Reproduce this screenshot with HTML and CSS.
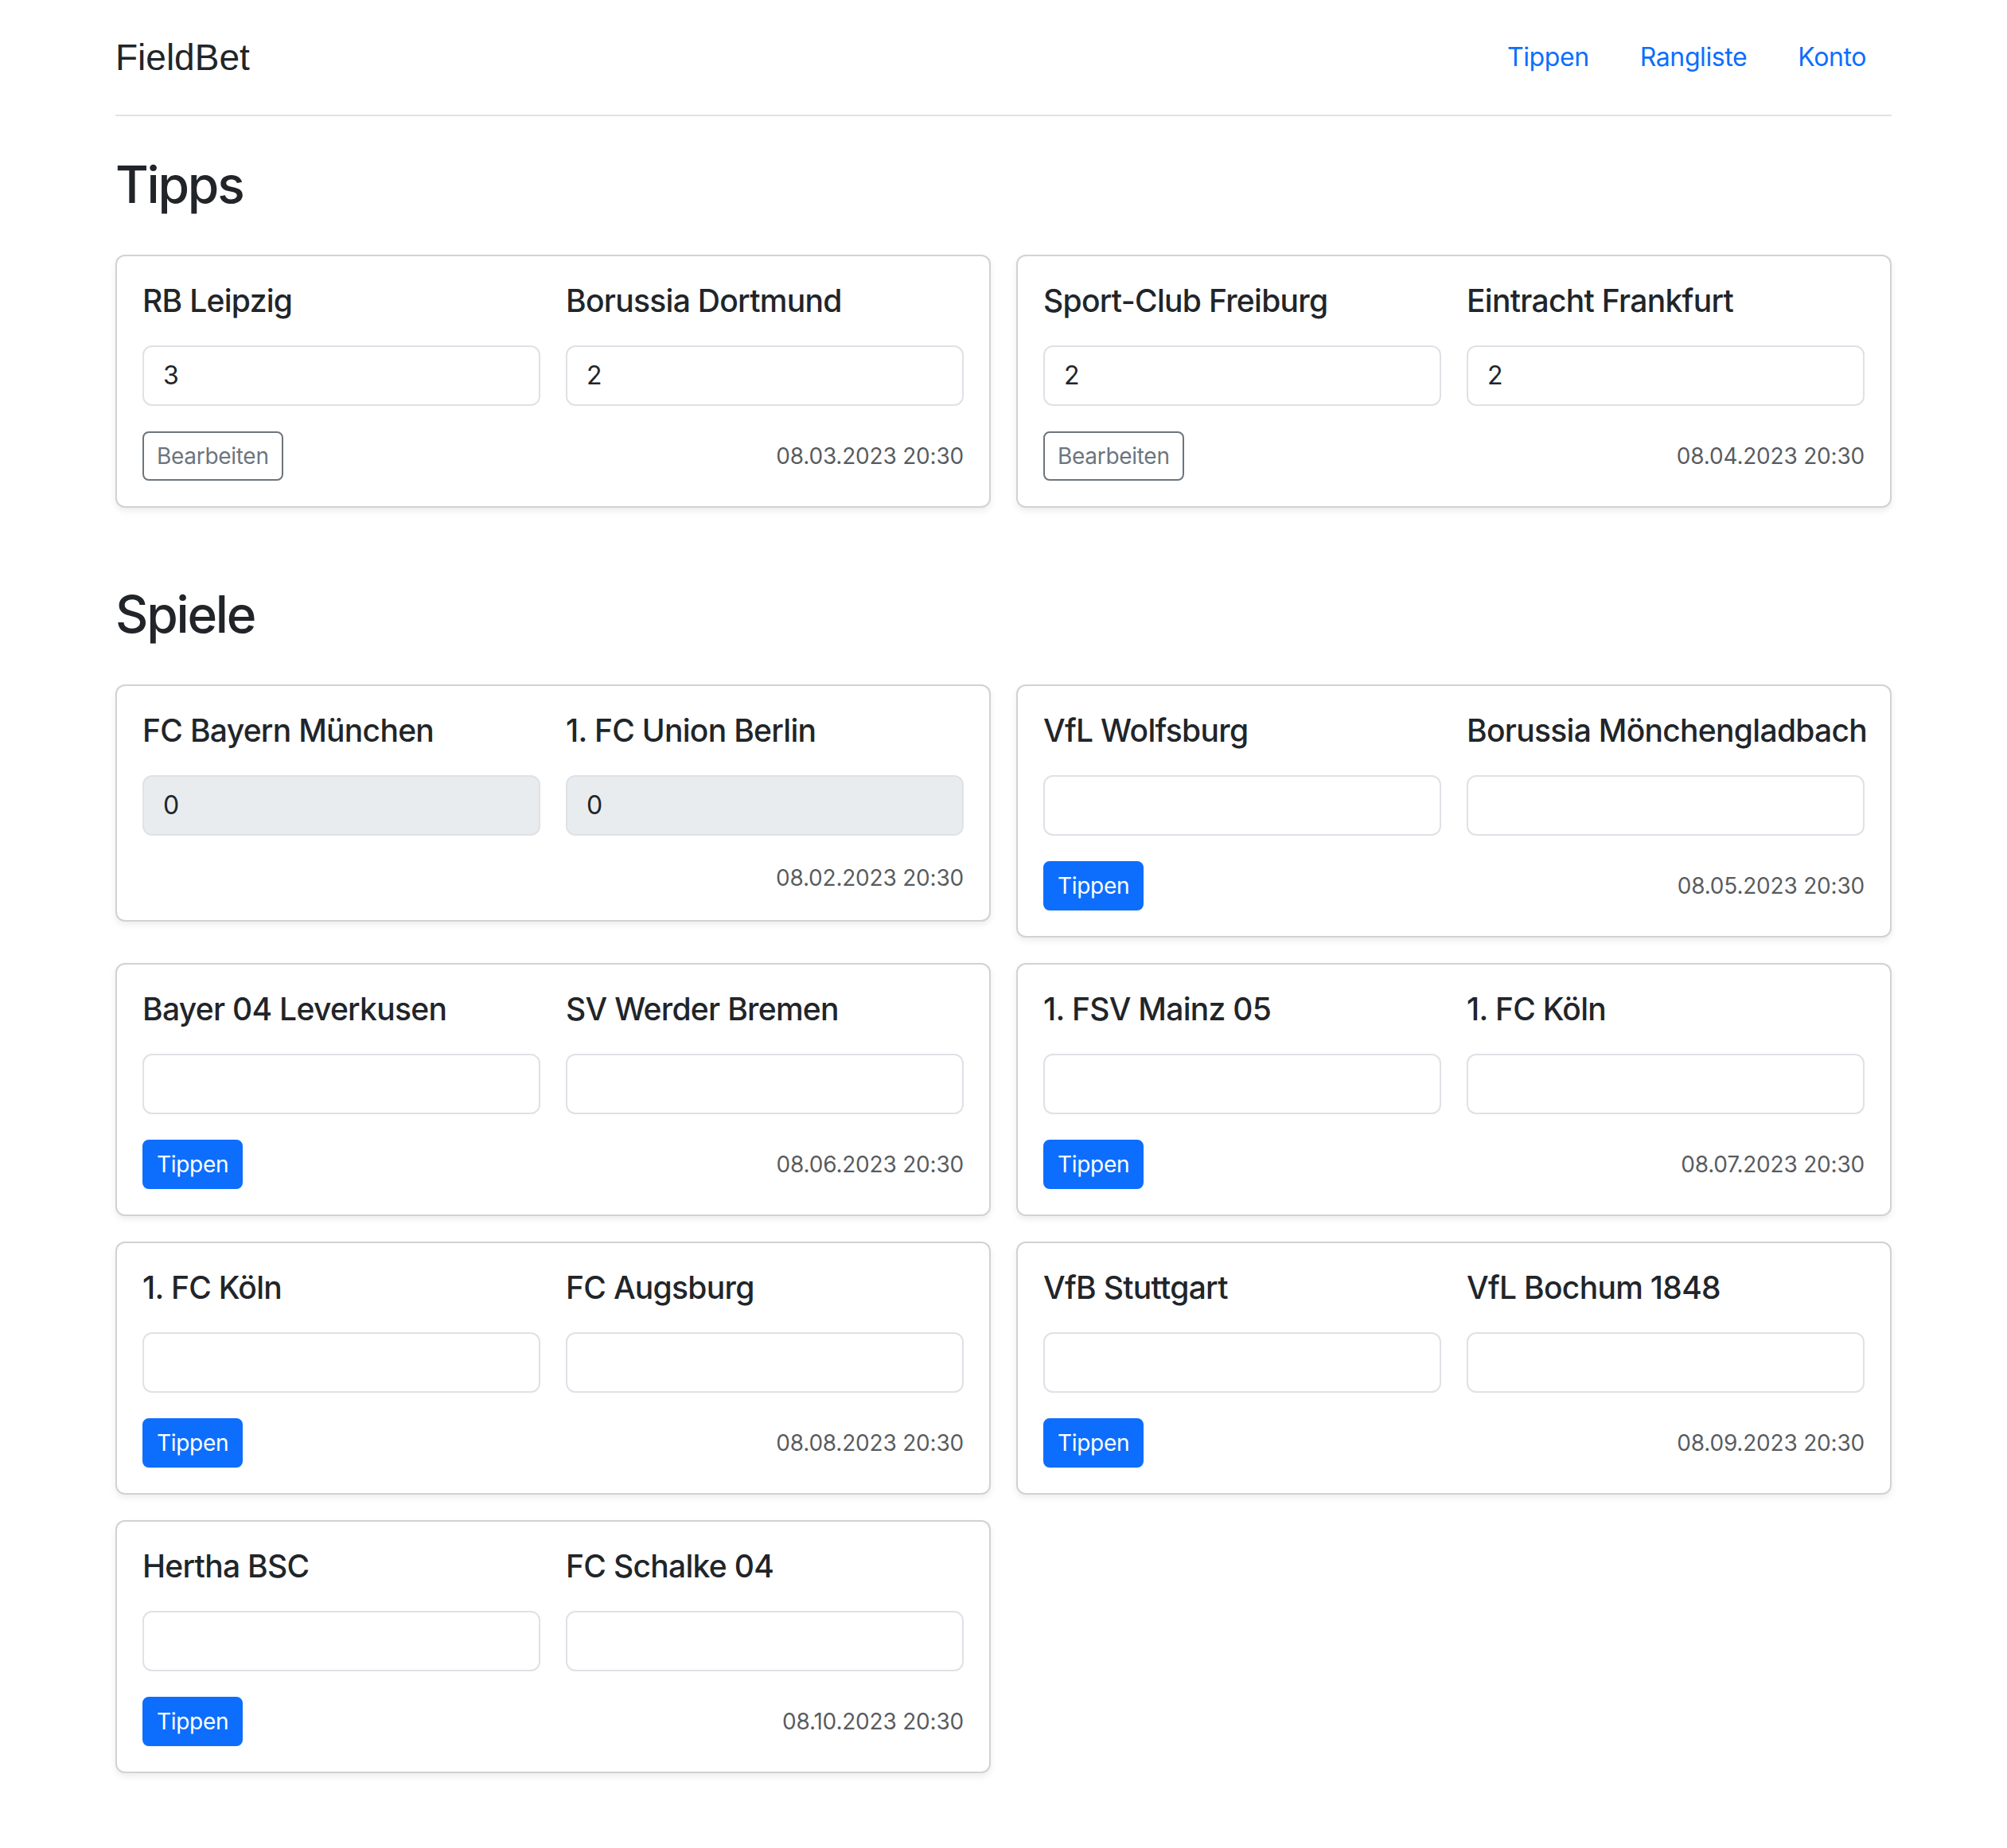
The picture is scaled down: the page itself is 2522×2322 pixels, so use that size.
FILE: index.html
```html
<!DOCTYPE html>
<html lang="de">
<head>
<meta charset="utf-8">
<title>FieldBet</title>
<link rel="stylesheet" href="styles.css">
</head>
<body>
<div class="container">
  <header class="header">
    <a class="brand" href="#">FieldBet</a>
    <ul class="nav">
      <li><a class="nav-link" href="#">Tippen</a></li>
      <li><a class="nav-link" href="#">Rangliste</a></li>
      <li><a class="nav-link" href="#">Konto</a></li>
    </ul>
  </header>

  <section class="section">
    <h2 class="title">Tipps</h2>
    <div class="grid">
      <div class="card">
        <div class="teams">
          <div class="team"><h5 class="team-name">RB Leipzig</h5><input class="score" value="3"></div>
          <div class="team"><h5 class="team-name">Borussia Dortmund</h5><input class="score" value="2"></div>
        </div>
        <div class="card-foot">
          <button class="btn btn-outline">Bearbeiten</button>
          <span class="date">08.03.2023 20:30</span>
        </div>
      </div>
      <div class="card">
        <div class="teams">
          <div class="team"><h5 class="team-name">Sport-Club Freiburg</h5><input class="score" value="2"></div>
          <div class="team"><h5 class="team-name">Eintracht Frankfurt</h5><input class="score" value="2"></div>
        </div>
        <div class="card-foot">
          <button class="btn btn-outline">Bearbeiten</button>
          <span class="date">08.04.2023 20:30</span>
        </div>
      </div>
    </div>
  </section>

  <section class="section">
    <h2 class="title">Spiele</h2>
    <div class="grid">
      <div class="card">
        <div class="teams">
          <div class="team"><h5 class="team-name">FC Bayern München</h5><input class="score" value="0" disabled></div>
          <div class="team"><h5 class="team-name">1. FC Union Berlin</h5><input class="score" value="0" disabled></div>
        </div>
        <div class="card-foot">
          <span class="date">08.02.2023 20:30</span>
        </div>
      </div>
      <div class="card">
        <div class="teams">
          <div class="team"><h5 class="team-name">VfL Wolfsburg</h5><input class="score"></div>
          <div class="team"><h5 class="team-name">Borussia Mönchengladbach</h5><input class="score"></div>
        </div>
        <div class="card-foot">
          <button class="btn btn-primary">Tippen</button>
          <span class="date">08.05.2023 20:30</span>
        </div>
      </div>
      <div class="card">
        <div class="teams">
          <div class="team"><h5 class="team-name">Bayer 04 Leverkusen</h5><input class="score"></div>
          <div class="team"><h5 class="team-name">SV Werder Bremen</h5><input class="score"></div>
        </div>
        <div class="card-foot">
          <button class="btn btn-primary">Tippen</button>
          <span class="date">08.06.2023 20:30</span>
        </div>
      </div>
      <div class="card">
        <div class="teams">
          <div class="team"><h5 class="team-name">1. FSV Mainz 05</h5><input class="score"></div>
          <div class="team"><h5 class="team-name">1. FC Köln</h5><input class="score"></div>
        </div>
        <div class="card-foot">
          <button class="btn btn-primary">Tippen</button>
          <span class="date">08.07.2023 20:30</span>
        </div>
      </div>
      <div class="card">
        <div class="teams">
          <div class="team"><h5 class="team-name">1. FC Köln</h5><input class="score"></div>
          <div class="team"><h5 class="team-name">FC Augsburg</h5><input class="score"></div>
        </div>
        <div class="card-foot">
          <button class="btn btn-primary">Tippen</button>
          <span class="date">08.08.2023 20:30</span>
        </div>
      </div>
      <div class="card">
        <div class="teams">
          <div class="team"><h5 class="team-name">VfB Stuttgart</h5><input class="score"></div>
          <div class="team"><h5 class="team-name">VfL Bochum 1848</h5><input class="score"></div>
        </div>
        <div class="card-foot">
          <button class="btn btn-primary">Tippen</button>
          <span class="date">08.09.2023 20:30</span>
        </div>
      </div>
      <div class="card">
        <div class="teams">
          <div class="team"><h5 class="team-name">Hertha BSC</h5><input class="score"></div>
          <div class="team"><h5 class="team-name">FC Schalke 04</h5><input class="score"></div>
        </div>
        <div class="card-foot">
          <button class="btn btn-primary">Tippen</button>
          <span class="date">08.10.2023 20:30</span>
        </div>
      </div>
    </div>
  </section>
</div>
</body>
</html>
```

FILE: styles.css
```css
* { box-sizing: border-box; }

body {
  margin: 0;
  font-family: Inter, "Noto Sans", sans-serif;
  font-size: 32px;
  line-height: 1.5;
  color: #212529;
  background: #fff;
}

.container {
  max-width: 2280px;
  margin: 0 auto;
  padding: 0 24px;
}

.header {
  display: flex;
  align-items: center;
  padding: 32px 0;
  margin-bottom: 48px;
  border-bottom: 2px solid #dee2e6;
}

.brand {
  margin-right: auto;
  font-family: "Liberation Sans", Arial, sans-serif;
  font-size: 46px;
  line-height: 72px;
  color: #212529;
  text-decoration: none;
}

.nav {
  display: flex;
  list-style: none;
  margin: 0;
  padding: 0;
}

.nav-link {
  display: block;
  padding: 16px 32px;
  font-size: 32px;
  line-height: 48px;
  letter-spacing: -0.4px;
  color: #0d6efd;
  text-decoration: none;
}

.section { margin-bottom: 96px; }

.title {
  margin: 0 0 49px;
  font-size: 64px;
  font-weight: 500;
  line-height: 1.2;
  letter-spacing: -2.2px;
}

.grid {
  display: grid;
  grid-template-columns: minmax(0, 1fr) minmax(0, 1fr);
  column-gap: 32px;
  row-gap: 32px;
  align-items: start;
}

.card {
  background: #fff;
  border: 2px solid rgba(0, 0, 0, 0.175);
  border-radius: 12px;
  box-shadow: 0 4px 8px rgba(0, 0, 0, 0.075);
  padding: 32px;
}

.teams {
  display: grid;
  grid-template-columns: minmax(0, 1fr) minmax(0, 1fr);
  column-gap: 32px;
}

.team-name {
  margin: 0 0 32px;
  font-size: 39px;
  font-weight: 500;
  line-height: 48px;
  white-space: nowrap;
  letter-spacing: -0.7px;
}

.score {
  display: block;
  width: 100%;
  padding: 12px 24px;
  font-family: inherit;
  font-size: 32px;
  line-height: 48px;
  color: #212529;
  background: #fff;
  border: 2px solid #dee2e6;
  border-radius: 12px;
  outline: none;
}

.score:disabled {
  background: #e9ecef;
  color: #212529;
  -webkit-text-fill-color: #212529;
  opacity: 1;
}

.card-foot {
  margin-top: 32px;
  display: flex;
  align-items: center;
  justify-content: space-between;
}

.date {
  margin-left: auto;
  font-size: 28px;
  line-height: 42px;
  letter-spacing: -0.2px;
  color: rgba(33, 37, 41, 0.75);
}

.btn {
  font-family: inherit;
  font-size: 28px;
  line-height: 42px;
  letter-spacing: -0.3px;
  padding: 8px 16px;
  border-radius: 8px;
  border: 2px solid;
  cursor: pointer;
}

.btn-primary {
  background: #0d6efd;
  border-color: #0d6efd;
  color: #fff;
}

.btn-outline {
  background: transparent;
  border-color: #6c757d;
  color: #6c757d;
}
```
